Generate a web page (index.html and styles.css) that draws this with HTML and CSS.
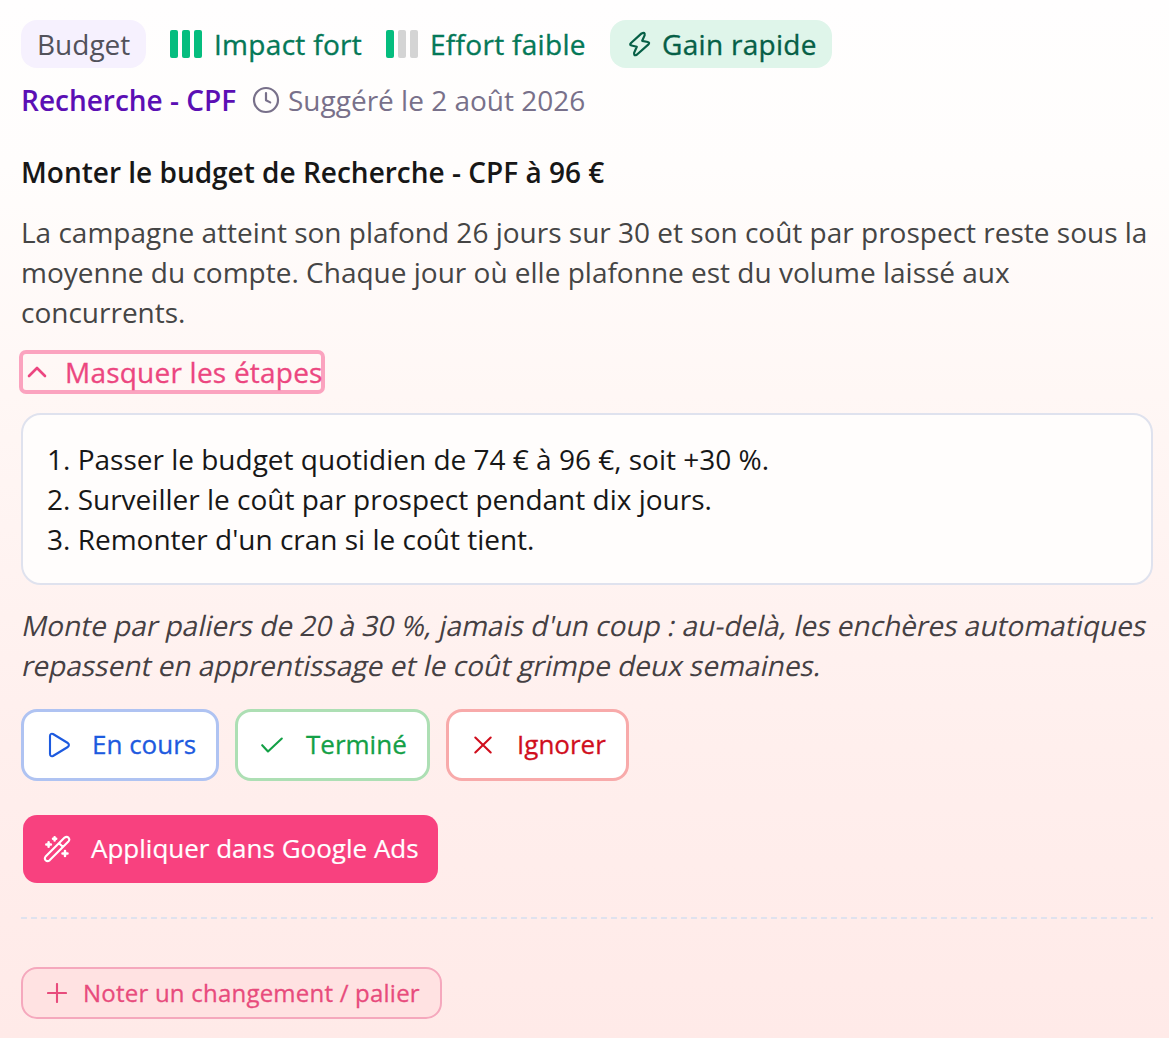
FILE: index.html
```html
<!DOCTYPE html>
<html lang="fr">
<head>
<meta charset="utf-8">
<title>Recommandation</title>
<link rel="stylesheet" href="styles.css">
</head>
<body>
<article class="card">
  <div class="tags">
    <span class="badge badge-type">Budget</span>
    <span class="level"><span class="bars"><i class="on"></i><i class="on"></i><i class="on"></i></span><span class="t-impact">Impact fort</span></span>
    <span class="level"><span class="bars"><i class="on"></i><i></i><i></i></span><span class="t-effort">Effort faible</span></span>
    <span class="badge badge-win">
      <svg class="bolt" viewBox="0 0 24 28" fill="none" stroke="currentColor" stroke-width="2.2" stroke-linejoin="round"><path d="M13.600 3.400 L3 13 Q1.200 15 3.600 15.500 L8.800 16.800 L6.200 22.600 Q5.400 26.400 8.800 24.800 L20.200 14.600 Q22.200 12.600 19.800 12 L14.200 10.800 L16.600 5.400 Q17.200 1.600 13.600 3.400Z"/></svg>
      <span class="t-win">Gain rapide</span>
    </span>
  </div>
  <div class="meta">
    <span class="campaign">Recherche - CPF</span>
    <svg class="clock" viewBox="0 0 28 28" fill="none" stroke="currentColor" stroke-width="2.2" stroke-linecap="round" stroke-linejoin="round"><circle cx="14" cy="14" r="12"/><path d="M14 7v7.200l4.200 2.200"/></svg>
    <span class="date">Suggéré le 2 août 2026</span>
  </div>
  <h2 class="title">Monter le budget de Recherche - CPF à 96 €</h2>
  <p class="text">La campagne atteint son plafond 26 jours sur 30 et son coût par prospect reste sous la moyenne du compte. Chaque jour où elle plafonne est du volume laissé aux concurrents.</p>
  <button class="toggle">
    <svg class="chevron" viewBox="0 0 20 12" fill="none" stroke="currentColor" stroke-width="2.600" stroke-linecap="round" stroke-linejoin="round"><path d="M2 10 10 2l8 8"/></svg>
    <span>Masquer les étapes</span>
  </button>
  <ol class="steps">
    <li>1. Passer le budget quotidien de 74 € à 96 €, soit +30 %.</li>
    <li>2. Surveiller le coût par prospect pendant dix jours.</li>
    <li>3. Remonter d'un cran si le coût tient.</li>
  </ol>
  <p class="hint"><span>Monte par paliers de 20 à 30 %, jamais d'un coup : au-delà, les enchères automatiques</span> <span>repassent en apprentissage et le coût grimpe deux semaines.</span></p>
  <div class="actions">
    <button class="btn btn-progress">
      <svg viewBox="0 0 28 28" fill="none" stroke="currentColor" stroke-width="2.100" stroke-linejoin="round"><path d="M6 5v18q.2 3 3 2l14.800-9q2.200-2 0-4L9 3q-2.800-1-3 2Z"/></svg>
      <span>En cours</span>
    </button>
    <button class="btn btn-done">
      <svg viewBox="0 0 28 28" fill="none" stroke="currentColor" stroke-width="2.100" stroke-linecap="round" stroke-linejoin="round"><path d="M4.200 14.200 10 20.500 23.800 7.500"/></svg>
      <span>Terminé</span>
    </button>
    <button class="btn btn-ignore">
      <svg viewBox="0 0 28 28" fill="none" stroke="currentColor" stroke-width="2.100" stroke-linecap="round"><path d="m6.300 6.500 15.400 15m0-15-15.400 15"/></svg>
      <span>Ignorer</span>
    </button>
  </div>
  <button class="apply">
    <svg viewBox="0 0 28 28" fill="none" stroke="currentColor" stroke-width="2.100" stroke-linecap="round" stroke-linejoin="round"><path d="M2.600 21.600 21.600 2.600q2.200-1.600 4 .2 1.500 1.800-.2 3.700L6.600 25.300q-2.200 1.700-4-.1-1.500-1.700 0-3.600ZM16 8.200l4 3.800"/><path stroke-width="2.500" d="M11.600 2.200v3.200M10 3.800h3.200M5.600 7.200v4.600M3.300 9.500h4.600M22 16v5M19.500 18.500h5"/></svg>
    <span>Appliquer dans Google Ads</span>
  </button>
  <svg class="divider" viewBox="0 0 1132 2" preserveAspectRatio="none"><path d="M0 1h1132"/></svg>
  <button class="note">
    <svg viewBox="0 0 20 20" fill="none" stroke="currentColor" stroke-width="2.100" stroke-linecap="round"><path d="M10 1v18M1 10h18"/></svg>
    <span>Noter un changement / palier</span>
  </button>
</article>
</body>
</html>
```
FILE: styles.css
```css
* { box-sizing: border-box; }
body {
  margin: 0;
  min-height: 1038px;
  background: linear-gradient(180deg, #fffefe 0%, #fffdfc 16%, #fff7f5 38%, #ffefed 72%, #ffeae8 100%);
  font: 28px/40px "Open Sans", sans-serif;
  color: #171717;
}
button { font: inherit; border: 0; background: none; margin: 0; padding: 0; }
svg { display: block; flex: none; }
span { white-space: nowrap; }
.card { display: flex; flex-direction: column; align-items: flex-start; padding: 20px 16px 19px 21px; }
.tags { display: flex; align-items: center; gap: 24px; height: 48px; }
.badge { display: flex; align-items: center; height: 48px; padding: 0 16px; border-radius: 16px; }
.badge-type { width: 125px; background: #f6f1fe; color: #52525b; }
.badge-win { width: 222px; background: #dff5ea; color: #065f46; gap: 10px; padding: 0 0 0 18px; }
.bolt { width: 24px; height: 28px; }
.level { display: flex; align-items: center; gap: 12px; color: #047857; }
.t-impact, .t-effort, .t-win { letter-spacing: .3px; -webkit-text-stroke: .35px currentColor; }
.t-impact { width: 148px; }
.t-effort { width: 156px; }
.bars { display: flex; gap: 4px; }
.bars i { width: 8px; height: 28px; border-radius: 2px; background: #d4d4d4; }
.bars .on { background: #05bd7e; }
.meta { display: flex; align-items: center; margin-top: 12px; color: #78708a; }
.campaign { width: 215px; color: #5b0fb4; font-weight: 600; }
.clock { width: 28px; height: 28px; margin: 0 8px 0 16px; }
.title { margin: 32px 0 20px; font-size: 28px; line-height: 40px; font-weight: 600; }
.text { margin: 0; color: #454545; }
.toggle { display: flex; align-items: center; height: 36px; margin: 22px 0 0 2px; width: 298px; border-radius: 3px; box-shadow: 0 0 0 4px #fba3bf; color: #ec4680; gap: 18px; padding-left: 4px; letter-spacing: .22px; -webkit-text-stroke: .3px currentColor; }
.chevron { width: 20px; height: 12px; }
.steps { align-self: stretch; list-style: none; margin: 23px 0 0; height: 172px; padding: 24px; border: 2px solid #dfe2ee; border-radius: 20px; background: #fffdfc; }
.hint { margin: 20px 0 0 2px; color: #454043; }
.hint span { display: block; width: max-content; transform: skewX(-12deg); }
.actions { display: flex; gap: 16px; margin-top: 24px; }
.btn { display: flex; align-items: center; gap: 20px; height: 72px; padding: 0 20px; border: 3px solid; border-radius: 16px; background: #fff; font-size: 26px; -webkit-text-stroke: .3px currentColor; }
.btn span, .apply span { padding-bottom: 2px; }
.btn svg, .apply svg { width: 28px; height: 28px; }
.btn-progress { width: 198px; color: #1d5adf; border-color: #afc3f2; }
.btn-done { width: 195px; color: #13a046; border-color: #addfb4; }
.btn-ignore { width: 183px; color: #d00e1d; border-color: #f8aaaa; }
.apply { display: flex; align-items: center; gap: 20px; width: 415px; height: 68px; margin: 34px 0 0 2px; padding: 0 20px; border-radius: 14px; background: #f8417f; color: #fff; font-size: 26px; -webkit-text-stroke: .2px currentColor; }
.divider { width: 1132px; height: 2px; margin-top: 34px; stroke: #dfe2ee; stroke-width: 2; stroke-dasharray: 6 4; }
.note { display: flex; align-items: center; width: 421px; height: 52px; margin-top: 48px; padding: 0 20px 0 24px; gap: 16px; border: 2px solid #f5a8bd; border-radius: 16px; background: #ffe2e2; color: #e84b7c; font-size: 24px; letter-spacing: .22px; -webkit-text-stroke: .3px currentColor; }
.note svg { width: 20px; height: 20px; }
```
